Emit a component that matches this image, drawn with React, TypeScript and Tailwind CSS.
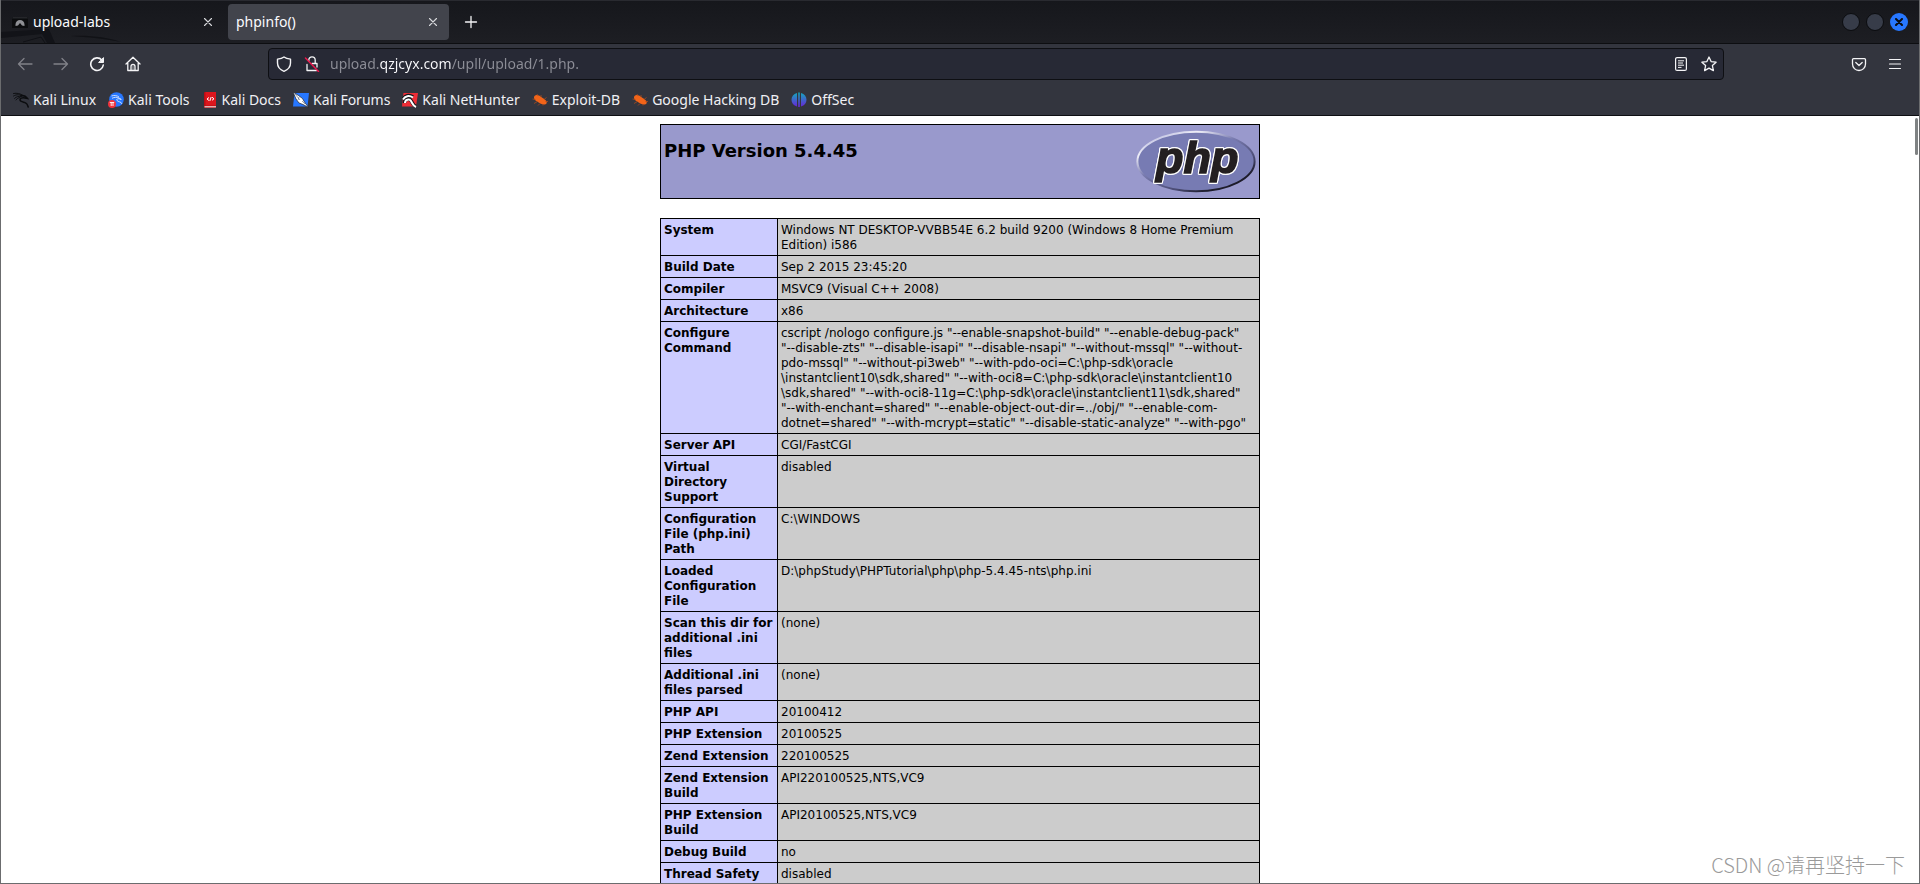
import type { ReactNode } from 'react';

const INFO_ROWS: { label: string; value: string }[] = [
  { label: 'System', value: 'Windows NT DESKTOP-VVBB54E 6.2 build 9200 (Windows 8 Home Premium Edition) i586' },
  { label: 'Build Date', value: 'Sep 2 2015 23:45:20' },
  { label: 'Compiler', value: 'MSVC9 (Visual C++ 2008)' },
  { label: 'Architecture', value: 'x86' },
  {
    label: 'Configure Command',
    value:
      'cscript /nologo configure.js "--enable-snapshot-build" "--enable-debug-pack" "--disable-zts" "--disable-isapi" "--disable-nsapi" "--without-mssql" "--without-pdo-mssql" "--without-pi3web" "--with-pdo-oci=C:\\php-sdk\\oracle\\instantclient10\\sdk,shared" "--with-oci8=C:\\php-sdk\\oracle\\instantclient10\\sdk,shared" "--with-oci8-11g=C:\\php-sdk\\oracle\\instantclient11\\sdk,shared" "--with-enchant=shared" "--enable-object-out-dir=../obj/" "--enable-com-dotnet=shared" "--with-mcrypt=static" "--disable-static-analyze" "--with-pgo"',
  },
  { label: 'Server API', value: 'CGI/FastCGI' },
  { label: 'Virtual Directory Support', value: 'disabled' },
  { label: 'Configuration File (php.ini) Path', value: 'C:\\WINDOWS' },
  { label: 'Loaded Configuration File', value: 'D:\\phpStudy\\PHPTutorial\\php\\php-5.4.45-nts\\php.ini' },
  { label: 'Scan this dir for additional .ini files', value: '(none)' },
  { label: 'Additional .ini files parsed', value: '(none)' },
  { label: 'PHP API', value: '20100412' },
  { label: 'PHP Extension', value: '20100525' },
  { label: 'Zend Extension', value: '220100525' },
  { label: 'Zend Extension Build', value: 'API220100525,NTS,VC9' },
  { label: 'PHP Extension Build', value: 'API20100525,NTS,VC9' },
  { label: 'Debug Build', value: 'no' },
  { label: 'Thread Safety', value: 'disabled' },
];

// Long Windows paths may wrap in front of a backslash
const wrapPaths = (text: string) => text.replaceAll('\\', '\u200b\\');

function SpiderBug() {
  return (
    <svg viewBox="0 0 16 16" className="size-4">
      <path d="M2.500 4C4 2.500 6.500 3 8.500 4.500l4 2.800c1.800 1.200 2.800 2.700 2 4.200-1 1.500-3.700 1.200-5.700.3L5 9.500C3 8.500 1 6 2.500 4z" fill="#f26419" />
      <path d="M6 4L5 2M9 5V3M12 7.500l2.500-2M13.500 9.500H16M3.500 7.500L.5 7M5.500 9.500L2 11.500M8 11.500L6 13.500M11 12v1.500" stroke="#a94b1e" strokeWidth=".8" fill="none" />
    </svg>
  );
}

const BOOKMARKS: { label: string; icon: ReactNode }[] = [
  {
    label: 'Kali Linux',
    icon: (
      <svg viewBox="0 0 16 16" className="size-4" fill="none" stroke="#0b0c0f" strokeLinecap="round">
        <path d="M.5 1.500C4 .8 7.500 1.500 10 3.500M.5 4C4 2 7 2.500 9.500 4M1.500 6.500C3.500 4.300 6 4 8.500 4.500M3 8c1-1.500 2.500-2.300 4-2.500" strokeWidth=".9" />
        <path d="M8 3.500c3-.5 5 .8 6.500 3L12 6C9 5.500 6.800 6.300 7 8c.2 1.800 3 2 5 2.600 1.800.6 2.700 2.200 3.200 4.400" strokeWidth="1.500" />
      </svg>
    ),
  },
  {
    label: 'Kali Tools',
    icon: (
      <svg viewBox="0 0 16 16" className="size-4">
        <circle cx="8.500" cy="7.500" r="7.300" fill="#2777ff" />
        <path d="M3.500 4c3-1 5.500-.5 7.500 1M4 6.300c2.500-1.300 5-1.300 7-.3l2.500 1.500M13 7.500C10 6 8 7 9 8.500s4.500 1 5 3.500" stroke="#dbe8ff" strokeWidth=".9" fill="none" />
        <circle cx="4" cy="12" r="4" fill="#f0323c" />
        <path d="M1.800 10.500h4.400M3.200 10.500v3.500M5 10.500v3.500" stroke="#fff" strokeWidth=".9" fill="none" />
      </svg>
    ),
  },
  {
    label: 'Kali Docs',
    icon: (
      <svg viewBox="0 0 16 16" className="size-4">
        <rect x="2" width="12" height="16" rx="1" fill="#b90d14" />
        <path d="M3.500 0H14v13.500H3.500z" fill="#dd161d" />
        <path d="M2.500 14.800H14" stroke="#ecdcdc" strokeWidth="1.200" />
        <path d="M7 5.500L5 7l2 1.500M7.800 9l1.400-4M10 5.200l2 1.600-2 1.500" stroke="#fff" fill="none" />
      </svg>
    ),
  },
  {
    label: 'Kali Forums',
    icon: (
      <svg viewBox="0 0 16 16" className="size-4">
        <path d="M1.500 1H16l-1.500 13.500H0z" fill="#2777ff" />
        <path d="M0 0l5.500 3.500 4 3 2 3.500L15.500 15.500 10 12.500 6 11 3 7z" fill="#fff" stroke="#1c2128" strokeWidth=".7" />
        <path d="M2 2l5 6M6 5l-1 3M9 9l3 3" stroke="#596273" strokeWidth=".6" />
      </svg>
    ),
  },
  {
    label: 'Kali NetHunter',
    icon: (
      <svg viewBox="0 0 16 16" className="size-4">
        <path d="M1.500 1H16l-2 13.500H0z" fill="#ef2d36" />
        <path d="M1 7.500C3 3.500 7 2.500 11 5M2.500 11C2.500 7 7 6 9 8.500s1.500 4.500 5 6" stroke="#15171b" strokeWidth="3.600" fill="none" />
        <path d="M1 7.500C3 4 7 3 11 5.500M3 11c0-3.500 4.500-4.500 6-2s1.500 4.500 5 6" stroke="#fff" strokeWidth="2" fill="none" />
      </svg>
    ),
  },
  { label: 'Exploit-DB', icon: <SpiderBug /> },
  { label: 'Google Hacking DB', icon: <SpiderBug /> },
  {
    label: 'OffSec',
    icon: (
      <svg viewBox="0 0 16 16" className="size-4">
        <defs>
          <linearGradient id="offsec" x1="0" y1="0" x2="0" y2="1">
            <stop offset="0" stopColor="#12a9bd" />
            <stop offset="1" stopColor="#6a22d8" />
          </linearGradient>
        </defs>
        <path d="M6 1v13.500C2.500 13.500.5 11 .5 7.800S2.500 2 6 1zM10 1v13.500c3.500-1 5.500-3.500 5.500-6.700S13.500 2 10 1zM7.200.5h1.600V15H7.200z" fill="url(#offsec)" />
      </svg>
    ),
  },
];

function CloseIcon() {
  return (
    <svg viewBox="0 0 10 10" className="size-[10px]">
      <path d="M1.500 1.500l7 7M8.500 1.500l-7 7" stroke="#d9dadd" strokeWidth="1.100" strokeLinecap="round" />
    </svg>
  );
}

function ToolbarButton({ label, children }: { label: string; children: ReactNode }) {
  return (
    <button aria-label={label} className="flex h-8 w-9 items-center justify-center">
      <svg viewBox="0 0 16 16" className="size-4 fill-none stroke-[#f4f4f6]" strokeWidth="1.300" strokeLinecap="round" strokeLinejoin="round">
        {children}
      </svg>
    </button>
  );
}

function TabBar() {
  return (
    <div className="relative flex h-[44px] shrink-0 items-center border-t border-b border-t-[#292a30] border-b-[#0d0e11] bg-linear-to-b from-[#16171c] to-[#1d1e23] text-sm text-[#fbfbfe]">
      <svg viewBox="0 0 130 14" className="absolute bottom-0 left-0 h-[14px] w-[130px]" fill="none">
        <path d="M0 3L48 0l6 14H46L41 5 0 9z" fill="#121318" />
        <path d="M22 13l18-5 4 6" stroke="#101116" />
        <path d="M70 7c18-1 36 1 50 6-14-3-34-5-50-6z" fill="#111216" />
      </svg>
      <div className="relative flex h-9 w-[227px] items-center gap-[5px] pr-[15px] pl-[11px]">
        <svg viewBox="0 0 16 16" className="size-4">
          <path d="M0 3.500h16V14H0z" fill="#0b0c0e" />
          <path d="M0 4.500l1-1.500h14l1 1.500z" fill="#25262a" />
          <path d="M3.500 12v-1.500a4.500 4.500 0 0 1 9 0V12l-2.500-.5L8 9l-2 2.500z" fill="#8f9095" />
        </svg>
        <span className="flex-1">upload-labs</span>
        <button aria-label="Close upload-labs">
          <CloseIcon />
        </button>
      </div>
      <div className="flex h-9 w-[221px] items-center rounded bg-[#42444c] pr-[11px] pl-2">
        <span className="flex-1">phpinfo()</span>
        <button aria-label="Close phpinfo()">
          <CloseIcon />
        </button>
      </div>
      <button aria-label="New tab" className="ml-[15px]">
        <svg viewBox="0 0 14 14" className="size-[14px]">
          <path d="M7 1.500v11M1.500 7h11" stroke="#f4f4f6" strokeWidth="1.300" strokeLinecap="round" />
        </svg>
      </button>
      <div className="mr-[11px] ml-auto flex gap-[6px]">
        <button aria-label="Minimize" className="size-[18px] rounded-full border border-[#0b0c0f] bg-[#373c49]" />
        <button aria-label="Maximize" className="size-[18px] rounded-full border border-[#0b0c0f] bg-[#373c49]" />
        <button aria-label="Close window" className="flex size-[18px] items-center justify-center rounded-full bg-[#2777ff]">
          <svg viewBox="0 0 8 8" className="size-2">
            <path d="M1 1l6 6M7 1L1 7" stroke="#0b0c0f" strokeWidth="2" strokeLinecap="round" />
          </svg>
        </button>
      </div>
    </div>
  );
}

function NavBar() {
  return (
    <div className="flex h-10 shrink-0 items-center px-[6px]">
      <div className="flex opacity-40">
        <ToolbarButton label="Back">
          <path d="M15 8H1.500M7 2.500L1.500 8 7 13.500" />
        </ToolbarButton>
        <ToolbarButton label="Forward">
          <path d="M1 8h13.500M9 2.500L14.500 8 9 13.500" />
        </ToolbarButton>
      </div>
      <ToolbarButton label="Reload">
        <path d="M12.800 4A6.300 6.300 0 1 0 14.300 9" strokeWidth="1.600" />
        <path d="M14.500 2v4.500H10z" fill="#f4f4f6" strokeWidth="1" />
      </ToolbarButton>
      <ToolbarButton label="Home">
        <path d="M1 8l7-6.800L15 8M2.800 7v7.500h10.400V7M6 14.500V10.500a2 2 0 0 1 4 0v4" />
        <path d="M8 10.500v4" strokeWidth=".6" />
      </ToolbarButton>
      <div className="mx-[117px] flex h-8 flex-1 items-center rounded border border-[#0e0f13] bg-[#272935] pr-[6px] pl-[7px]">
        <button aria-label="Tracking protection" className="flex size-4 items-center justify-center">
          <svg viewBox="0 0 16 16" className="size-4 fill-none stroke-[#f4f4f6]" strokeWidth="1.400" strokeLinejoin="round">
            <path d="M8 1c1.600 1.300 3.800 1.900 6.500 2.100v4C14.500 11 12 13.800 8 15.300 4 13.800 1.500 11 1.500 7.100v-4C4.200 2.900 6.400 2.300 8 1z" />
          </svg>
        </button>
        <button aria-label="Connection not secure" className="ml-3 flex size-4 items-center justify-center">
          <svg viewBox="0 0 16 16" className="size-4 fill-none" strokeWidth="1.300" strokeLinejoin="round" strokeLinecap="round">
            <path d="M4.800 5V4a3.200 3.200 0 0 1 6.400 0v3M3 8.500v6h9.500M8 7.500h5v3.500" stroke="#f4f4f6" />
            <path d="M1.500 2L14.500 15.500" stroke="#e8184c" strokeWidth="1.500" />
          </svg>
        </button>
        <input
          type="text"
          aria-label="Address"
          defaultValue="upload.qzjcyx.com/upll/upload/1.php."
          className="ml-[10px] min-w-0 flex-1 bg-[linear-gradient(90deg,#8d8e97_50px,#fbfbfe_50px,#fbfbfe_122px,#8d8e97_122px)] bg-clip-text text-sm text-transparent outline-none"
        />
        <div className="flex items-center gap-3">
          <button aria-label="Reader view">
            <svg viewBox="0 0 16 16" className="size-4 fill-none stroke-[#f4f4f6]" strokeWidth="1.200" strokeLinejoin="round">
              <rect x="2.600" y="1.600" width="10.800" height="12.800" rx="1.500" />
              <path d="M5 4.800h6M5 7h5M5 9.200h6M5 11.400h3.500" strokeWidth="1" />
            </svg>
          </button>
          <button aria-label="Bookmark this page">
            <svg viewBox="0 0 16 16" className="size-4 fill-none stroke-[#f4f4f6]" strokeWidth="1.300" strokeLinejoin="round">
              <path d="M8 1l2.100 4.600 5 .6-3.700 3.400 1 5L8 12.100l-4.400 2.500 1-5L.9 6.200l5-.6z" />
            </svg>
          </button>
        </div>
      </div>
      <ToolbarButton label="Save to Pocket">
        <path d="M2.500 2.700h11a1 1 0 0 1 1 1V8a6.500 6.500 0 0 1-13 0V3.700a1 1 0 0 1 1-1z" />
        <path d="M4.800 6.500L8 9.500l3.200-3" />
      </ToolbarButton>
      <ToolbarButton label="Menu">
        <path d="M2.500 3.500h11M2.500 8h11M2.500 12.500h11" strokeWidth="1.100" />
      </ToolbarButton>
    </div>
  );
}

function BookmarksBar() {
  return (
    <div className="flex h-8 shrink-0 items-center gap-3 border-b border-[#0e0f13] pl-3 text-sm text-[#f0f0f4]">
      {BOOKMARKS.map((bookmark) => (
        <a key={bookmark.label} href="#" className="flex items-center gap-1 whitespace-nowrap">
          {bookmark.icon}
          {bookmark.label}
        </a>
      ))}
    </div>
  );
}

function PhpLogo() {
  return (
    <svg viewBox="0 0 120 67" className="h-[67px] w-[120px] shrink-0">
      <defs>
        <linearGradient id="rim" x1="0.100" y1="0" x2="0.900" y2="1">
          <stop offset="0" stopColor="#a5a7d4" />
          <stop offset="0.200" stopColor="#eeeef8" />
          <stop offset="0.420" stopColor="#7a7cb0" />
          <stop offset="0.700" stopColor="#4b4c74" />
          <stop offset="0.850" stopColor="#1d1c2b" />
        </linearGradient>
      </defs>
      <ellipse cx="60" cy="33.500" rx="58.600" ry="29.800" fill="#777bb3" stroke="url(#rim)" strokeWidth="2" />
      <text
        x="20"
        y="45"
        fontFamily="Liberation Sans, Arial, sans-serif"
        fontSize="45"
        fontWeight="bold"
        fontStyle="italic"
        fill="#231f20"
        stroke="#231f20"
        strokeWidth="1.500"
        className="[filter:drop-shadow(1px_0_0_#fff)_drop-shadow(-1px_0_0_#fff)_drop-shadow(0_1px_0_#fff)_drop-shadow(0_-1px_0_#fff)]"
      >
        php
      </text>
    </svg>
  );
}

function PhpInfo() {
  return (
    <main className="relative min-h-0 flex-1 overflow-hidden bg-white px-2 pt-2 font-['DejaVu_Sans',sans-serif] text-xs/[15px] text-black">
      <header className="mx-auto flex h-[75px] max-w-[600px] items-start justify-between border border-black bg-[#9999cc] p-[3px]">
        <h1 className="pt-3 text-lg/[21px] font-bold">PHP Version 5.4.45</h1>
        <a href="#" aria-label="PHP">
          <PhpLogo />
        </a>
      </header>
      <table className="mx-auto mt-[19px] w-full max-w-[600px] table-fixed border-collapse">
        <tbody>
          {INFO_ROWS.map((row) => (
            <tr key={row.label} className="align-top">
              <th scope="row" className="w-[117px] border border-black bg-[#ccccff] px-[3px] pt-1 pb-[2px] text-left font-bold">
                {row.label}
              </th>
              <td className="border border-black bg-[#cccccc] pt-1 pr-[10px] pb-[2px] pl-[3px]">{wrapPaths(row.value)}</td>
            </tr>
          ))}
        </tbody>
      </table>
      <div className="absolute top-[2px] right-[1px] h-[37px] w-[3px] rounded-full bg-[#7f8283]" />
      <p className="absolute right-[14px] bottom-1 font-['Noto_Sans_CJK_SC',sans-serif] text-xl font-light text-[#9a9a9a]">
        CSDN @请再坚持一下
      </p>
    </main>
  );
}

export default function App() {
  return (
    <div className="flex h-screen flex-col overflow-hidden border-x border-b border-[#6b6c6e] bg-[#33353e] font-['Noto_Sans',sans-serif]">
      <TabBar />
      <NavBar />
      <BookmarksBar />
      <PhpInfo />
    </div>
  );
}
